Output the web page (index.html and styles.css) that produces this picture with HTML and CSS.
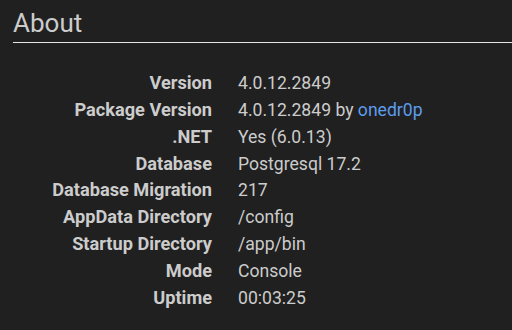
FILE: index.html
```html
<!DOCTYPE html>
<html lang="en">
  <head>
    <meta charset="UTF-8" />
    <title>About</title>
    <link rel="stylesheet" href="styles.css">
  </head>
  <body>
    <fieldset class="about">
      <legend class="legend">About</legend>

      <dl class="info">
        <dt>Version</dt>
        <dd>4.0.12.2849</dd>
        <dt>Package Version</dt>
        <dd>4.0.12.2849 by <a href="#">onedr0p</a></dd>
        <dt>.NET</dt>
        <dd>Yes (6.0.13)</dd>
        <dt>Database</dt>
        <dd>Postgresql 17.2</dd>
        <dt>Database Migration</dt>
        <dd>217</dd>
        <dt>AppData Directory</dt>
        <dd>/config</dd>
        <dt>Startup Directory</dt>
        <dd>/app/bin</dd>
        <dt>Mode</dt>
        <dd>Console</dd>
        <dt>Uptime</dt>
        <dd>00:03:25</dd>
      </dl>
    </fieldset>
  </body>
</html>
```

FILE: styles.css
```css
body {
  margin: 0;
  padding: 0;
  background-color: #202020;
  color: #ccc;
  font-family: Roboto, "Liberation Sans", sans-serif;
}

.about {
  margin: 0;
  padding: 0 0 0 13px;
  border: none;
  min-width: 0;
}

.legend {
  display: block;
  width: 100%;
  box-sizing: border-box;
  margin: 0;
  padding: 4px 0 0 0;
  float: left;
  font-size: 26px;
  font-weight: 400;
  line-height: 38px;
  color: #ccc;
  border-bottom: 1px solid #e5e5e5;
}

.info {
  clear: both;
  margin: 0;
  padding-top: 27px;
  display: grid;
  grid-template-columns: 199px 1fr;
  grid-auto-rows: 26.85px;
  column-gap: 26px;
  font-size: 17.6px;
  line-height: 26.85px;
}

.info dt {
  text-align: right;
  font-size: 18.2px;
  font-weight: bold;
  white-space: nowrap;
}

.info dd {
  margin: 0;
}

.info a {
  color: #5d9cec;
  text-decoration: none;
}
```
